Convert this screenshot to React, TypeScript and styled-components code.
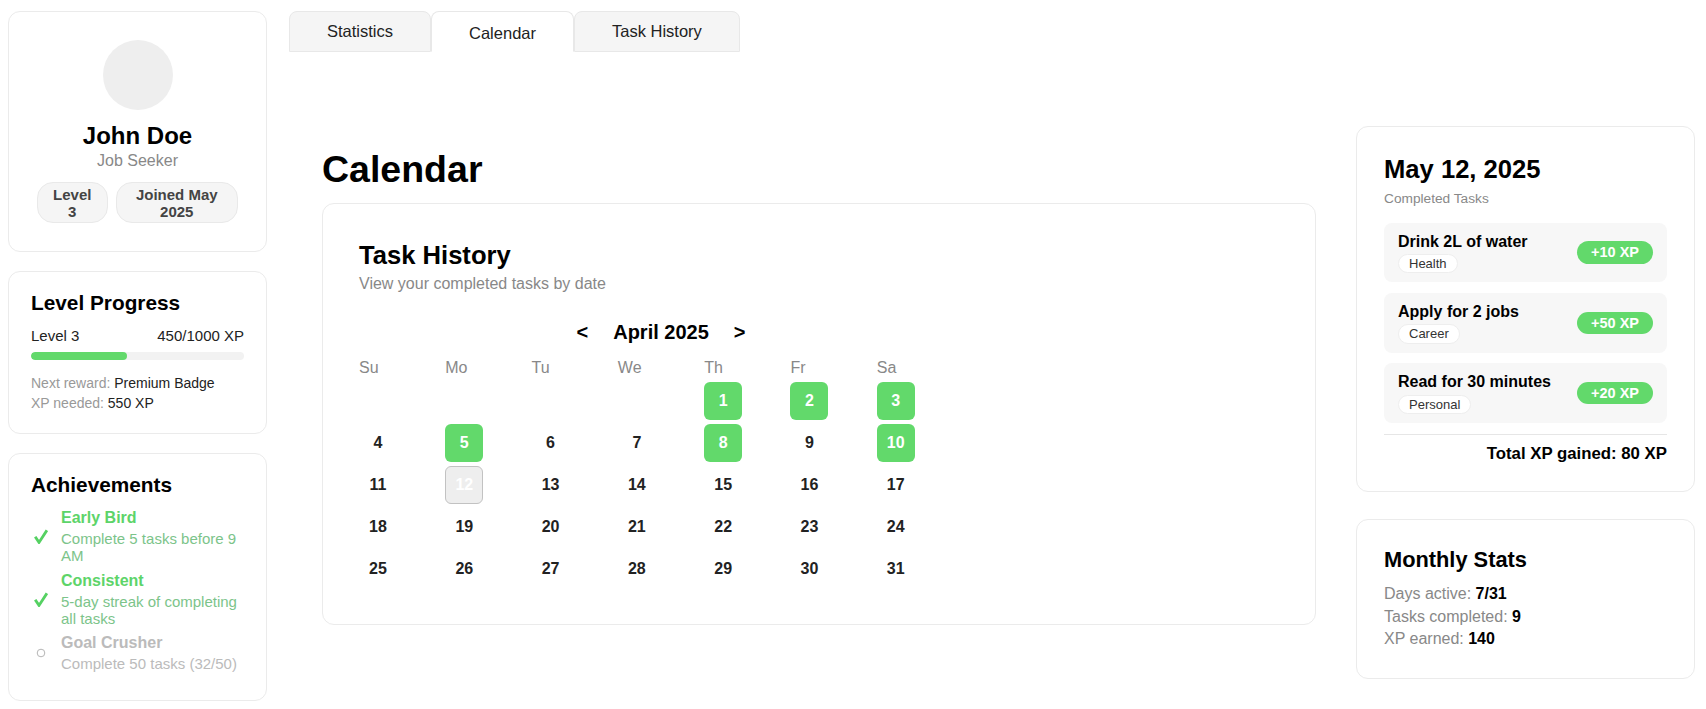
import React from "react";
import styled, { createGlobalStyle, css } from "styled-components";

const GREEN = "#62d96b";

const GlobalStyle = createGlobalStyle`
  html, body { margin: 0; padding: 0; background: #fff; }
  body {
    font-family: "Liberation Sans", Arial, Helvetica, sans-serif;
    color: #000;
    overflow: hidden;
  }
  * { box-sizing: border-box; }
`;

const Page = styled.div`
  display: flex;
  align-items: flex-start;
  gap: 22px;
  padding: 11px 11px 0 8px;
`;

const Sidebar = styled.aside`
  width: 259px;
  flex: none;
  display: flex;
  flex-direction: column;
  gap: 19px;
`;

const Card = styled.section<{ $pad?: string }>`
  background: #fff;
  border: 1px solid #ebebeb;
  border-radius: 12px;
  padding: ${(p) => p.$pad ?? "27px"};
`;

const ProfileCard = styled(Card)`
  display: flex;
  flex-direction: column;
  align-items: center;
`;

const Avatar = styled.div`
  width: 70px;
  height: 70px;
  border-radius: 50%;
  background: #eeeeee;
`;

const Name = styled.h2`
  margin: 12px 0 0;
  font-size: 24px;
  line-height: 1.15;
  font-weight: 700;
`;

const Role = styled.div`
  margin-top: 2px;
  font-size: 16px;
  color: #888;
  line-height: 1.15;
`;

const BadgeRow = styled.div`
  margin-top: 12px;
  width: 100%;
  display: flex;
  justify-content: center;
  gap: 8px;
`;

const Badge = styled.div`
  padding: 3px 15px 2px;
  background: #f5f5f5;
  border: 1px solid #e9e9e9;
  border-radius: 16px;
  font-size: 15px;
  line-height: 1.15;
  font-weight: 700;
  color: #444;
  text-align: center;
`;

const SideTitle = styled.h3`
  margin: 0;
  font-size: 20.8px;
  line-height: 24px;
  font-weight: 700;
`;

const ProgressRow = styled.div`
  margin-top: 12px;
  display: flex;
  justify-content: space-between;
  font-size: 15px;
  line-height: 1.15;
  color: #222;
`;

const Track = styled.div`
  margin-top: 7.5px;
  height: 8px;
  border-radius: 4px;
  background: #f2f2f2;
  overflow: hidden;
`;

const Fill = styled.div`
  height: 100%;
  border-radius: 4px;
  background: ${GREEN};
`;

const Meta = styled.div`
  margin-top: 14px;
  font-size: 14px;
  line-height: 19.5px;
  color: #222;
`;

const MetaLabel = styled.span`
  color: #999;
`;

const AchList = styled.ul`
  list-style: none;
  margin: 12px 0 0;
  padding: 0;
  display: flex;
  flex-direction: column;
  gap: 7px;
`;

const AchItem = styled.li`
  display: flex;
  align-items: center;
`;

const AchIcon = styled.span`
  width: 20px;
  flex: none;
  margin-right: 10px;
  display: flex;
  justify-content: center;
  align-items: center;
`;

const AchTitle = styled.div<{ $done: boolean }>`
  font-size: 16px;
  line-height: 1.15;
  font-weight: 700;
  color: ${(p) => (p.$done ? "#5dd469" : "#bbbbbb")};
`;

const AchDesc = styled.div<{ $done: boolean }>`
  margin-top: 2.6px;
  font-size: 15px;
  line-height: 1.15;
  color: ${(p) => (p.$done ? "#7cc48a" : "#bbbbbb")};
`;

const Main = styled.main`
  flex: 1;
  min-width: 0;
  display: flex;
  flex-direction: column;
`;

const Tabs = styled.nav`
  display: flex;
`;

const Tab = styled.button<{ $active?: boolean }>`
  font-family: inherit;
  font-size: 16.5px;
  line-height: 19px;
  color: #222;
  padding: 10px 37px;
  border: 1px solid #e8e8e8;
  border-radius: 8px 8px 0 0;
  background: #f5f5f5;
  cursor: pointer;
  ${(p) =>
    p.$active &&
    css`
      background: #fff;
      border-bottom-color: #fff;
      padding: 12px 37px 8px;
    `}
`;

const Panel = styled.div`
  padding: 74px 0 0 33px;
  display: flex;
  align-items: flex-start;
  gap: 40px;
`;

const CalendarSection = styled.div`
  flex: 1;
  min-width: 0;
`;

const PageTitle = styled.h1`
  margin: 21px 0 11px;
  font-size: 37.5px;
  line-height: 45px;
  font-weight: 700;
`;

const CalendarCard = styled(Card)`
  padding: 36px 36px 36px;
`;

const CardTitle = styled.h2`
  margin: 0;
  font-size: 25.6px;
  line-height: 30px;
  font-weight: 700;
`;

const Subtitle = styled.div`
  margin-top: 5px;
  font-size: 16px;
  line-height: 1.15;
  color: #888;
`;

const MonthNav = styled.div`
  width: 604px;
  margin-top: 28px;
  display: flex;
  justify-content: center;
  align-items: center;
  gap: 25px;
`;

const NavButton = styled.button`
  border: none;
  background: none;
  padding: 0;
  font-family: inherit;
  font-size: 20px;
  line-height: 23px;
  font-weight: 700;
  color: #000;
  cursor: pointer;
`;

const MonthLabel = styled.span`
  font-size: 20px;
  line-height: 23px;
  font-weight: 700;
`;

const Grid = styled.div`
  width: 604px;
  margin-top: 14px;
  display: grid;
  grid-template-columns: repeat(7, 1fr);
  row-gap: 4px;
`;

const DayHead = styled.div`
  font-size: 16px;
  line-height: 20px;
  color: #888;
`;

type DayState = "done" | "selected" | "none";

const DayCell = styled.div<{ $state: DayState }>`
  width: 38px;
  height: 38px;
  border-radius: 6px;
  display: flex;
  align-items: center;
  justify-content: center;
  font-size: 16px;
  font-weight: 700;
  color: #222;
  ${(p) =>
    p.$state === "done" &&
    css`
      background: ${GREEN};
      color: #fff;
    `}
  ${(p) =>
    p.$state === "selected" &&
    css`
      background: #eeeeee;
      border: 1px solid #c2c2c2;
      color: #fff;
    `}
`;

const RightColumn = styled.aside`
  width: 339px;
  flex: none;
  display: flex;
  flex-direction: column;
  gap: 27px;
`;

const SmallGray = styled.div`
  margin-top: 7px;
  font-size: 13.7px;
  line-height: 1.15;
  color: #888;
`;

const TaskList = styled.div`
  margin-top: 16px;
  display: flex;
  flex-direction: column;
  gap: 10.6px;
`;

const TaskItem = styled.div`
  background: #f7f7f7;
  border-radius: 8px;
  padding: 9px 14px;
  display: flex;
  align-items: center;
  justify-content: space-between;
`;

const TaskName = styled.div`
  font-size: 16px;
  line-height: 19.2px;
  font-weight: 700;
`;

const Category = styled.span`
  display: inline-block;
  margin-top: 3px;
  padding: 1px 10px;
  background: #fff;
  border: 1px solid #eeeeee;
  border-radius: 10px;
  font-size: 13px;
  line-height: 15.5px;
  color: #333;
`;

const XpPill = styled.span`
  padding: 3px 14px;
  border-radius: 12px;
  background: ${GREEN};
  color: #fff;
  font-size: 14.5px;
  line-height: 16.5px;
  font-weight: 700;
`;

const Divider = styled.hr`
  margin: 10.6px 0 0;
  border: none;
  border-top: 1px solid #e6e6e6;
`;

const Total = styled.div`
  padding-top: 9px;
  text-align: right;
  font-size: 16.8px;
  line-height: 20.4px;
  font-weight: 700;
`;

const StatsTitle = styled.h3`
  margin: 0;
  font-size: 21.8px;
  line-height: 26px;
  font-weight: 700;
`;

const StatsList = styled.div`
  margin-top: 10px;
  font-size: 16px;
  line-height: 22.7px;
  color: #888;
`;

const StatValue = styled.b`
  color: #000;
`;

const CheckIcon = () => (
  <svg width="14" height="15" viewBox="0 0 14 15" aria-hidden="true">
    <path d="M1.2 7.8 L5 13.4 L12.9 1.3" fill="none" stroke="#55d162" strokeWidth="2.8" strokeLinejoin="miter" />
  </svg>
);

const CircleIcon = () => (
  <svg width="10" height="10" viewBox="0 0 10 10" aria-hidden="true">
    <circle cx="5" cy="5" r="3.8" fill="none" stroke="#b5b5b5" strokeWidth="1" />
  </svg>
);

const achievements = [
  { title: "Early Bird", desc: "Complete 5 tasks before 9 AM", done: true },
  { title: "Consistent", desc: "5-day streak of completing all tasks", done: true },
  { title: "Goal Crusher", desc: "Complete 50 tasks (32/50)", done: false },
];

const tasks = [
  { name: "Drink 2L of water", cat: "Health", xp: 10 },
  { name: "Apply for 2 jobs", cat: "Career", xp: 50 },
  { name: "Read for 30 minutes", cat: "Personal", xp: 20 },
];

const weekDays = ["Su", "Mo", "Tu", "We", "Th", "Fr", "Sa"];
const doneDays = new Set([1, 2, 3, 5, 8, 10]);
const selectedDay = 12;
const leading = 4;

export default function App() {
  const cells: (number | null)[] = [
    ...Array.from({ length: leading }, () => null),
    ...Array.from({ length: 31 }, (_, i) => i + 1),
  ];

  return (
    <>
      <GlobalStyle />
      <Page>
        <Sidebar>
          <ProfileCard $pad="28px">
            <Avatar />
            <Name>John Doe</Name>
            <Role>Job Seeker</Role>
            <BadgeRow>
              <Badge>Level 3</Badge>
              <Badge>Joined May 2025</Badge>
            </BadgeRow>
          </ProfileCard>

          <Card $pad="19px 22px 20px">
            <SideTitle>Level Progress</SideTitle>
            <ProgressRow>
              <span>Level 3</span>
              <span>450/1000 XP</span>
            </ProgressRow>
            <Track>
              <Fill style={{ width: `${(450 / 1000) * 100}%` }} />
            </Track>
            <Meta>
              <div>
                <MetaLabel>Next reward: </MetaLabel>Premium Badge
              </div>
              <div>
                <MetaLabel>XP needed: </MetaLabel>550 XP
              </div>
            </Meta>
          </Card>

          <Card $pad="19px 22px 28px">
            <SideTitle>Achievements</SideTitle>
            <AchList>
              {achievements.map((a) => (
                <AchItem key={a.title}>
                  <AchIcon>{a.done ? <CheckIcon /> : <CircleIcon />}</AchIcon>
                  <div>
                    <AchTitle $done={a.done}>{a.title}</AchTitle>
                    <AchDesc $done={a.done}>{a.desc}</AchDesc>
                  </div>
                </AchItem>
              ))}
            </AchList>
          </Card>
        </Sidebar>

        <Main>
          <Tabs>
            <Tab>Statistics</Tab>
            <Tab $active>Calendar</Tab>
            <Tab>Task History</Tab>
          </Tabs>

          <Panel>
            <CalendarSection>
              <PageTitle>Calendar</PageTitle>
              <CalendarCard>
                <CardTitle>Task History</CardTitle>
                <Subtitle>View your completed tasks by date</Subtitle>
                <MonthNav>
                  <NavButton>&lt;</NavButton>
                  <MonthLabel>April 2025</MonthLabel>
                  <NavButton>&gt;</NavButton>
                </MonthNav>
                <Grid>
                  {weekDays.map((d) => (
                    <DayHead key={d}>{d}</DayHead>
                  ))}
                  {cells.map((n, i) =>
                    n === null ? (
                      <div key={`e${i}`} />
                    ) : (
                      <DayCell
                        key={n}
                        $state={n === selectedDay ? "selected" : doneDays.has(n) ? "done" : "none"}
                      >
                        {n}
                      </DayCell>
                    )
                  )}
                </Grid>
              </CalendarCard>
            </CalendarSection>

            <RightColumn>
              <Card>
                <CardTitle>May 12, 2025</CardTitle>
                <SmallGray>Completed Tasks</SmallGray>
                <TaskList>
                  {tasks.map((t) => (
                    <TaskItem key={t.name}>
                      <div>
                        <TaskName>{t.name}</TaskName>
                        <Category>{t.cat}</Category>
                      </div>
                      <XpPill>+{t.xp} XP</XpPill>
                    </TaskItem>
                  ))}
                </TaskList>
                <Divider />
                <Total>Total XP gained: 80 XP</Total>
              </Card>

              <Card>
                <StatsTitle>Monthly Stats</StatsTitle>
                <StatsList>
                  <div>
                    Days active: <StatValue>7/31</StatValue>
                  </div>
                  <div>
                    Tasks completed: <StatValue>9</StatValue>
                  </div>
                  <div>
                    XP earned: <StatValue>140</StatValue>
                  </div>
                </StatsList>
              </Card>
            </RightColumn>
          </Panel>
        </Main>
      </Page>
    </>
  );
}
